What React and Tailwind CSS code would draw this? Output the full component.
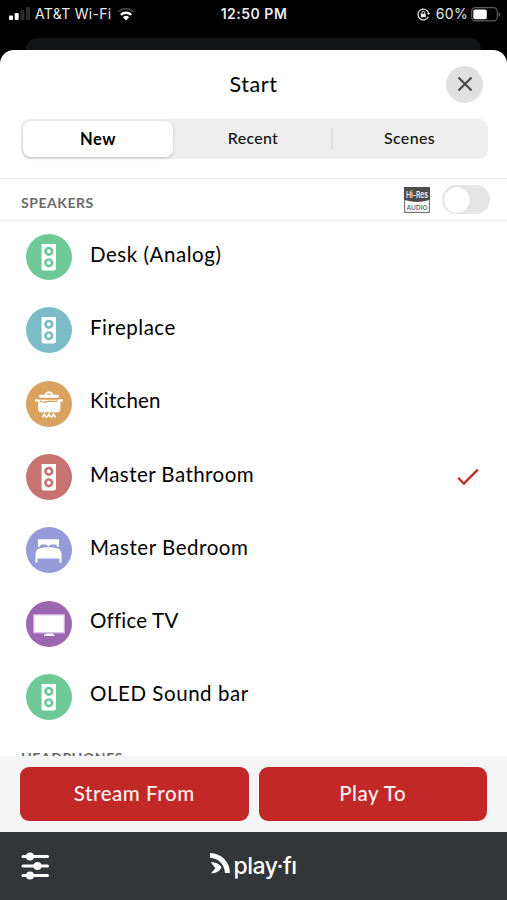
import React from "react";

function Signal() {
  return (
    <svg className="h-[14px] w-[22px]" viewBox="0 0 22 14">
      <rect x="0" y="8.6" width="4" height="4.4" rx="1" fill="#fff" />
      <rect x="5.7" y="6" width="4" height="7" rx="1" fill="#fff" />
      <rect x="11.4" y="3" width="4" height="10" rx="1" fill="#2c2c2c" />
      <rect x="17" y="0" width="4" height="13" rx="1" fill="#2c2c2c" />
    </svg>
  );
}

function Wifi() {
  return (
    <svg className="h-[14px] w-[18px]" viewBox="0 0 18 14" fill="none">
      <path d="M1.2 4.900a11.200 11.200 0 0 1 15.600 0" stroke="#3c3c3c" strokeWidth="2" />
      <path d="M3.800 7.800a7.600 7.600 0 0 1 10.400 0" stroke="#fff" strokeWidth="2.300" />
      <path d="M9 13.400 5.900 10.300a4.500 4.500 0 0 1 6.200 0Z" fill="#fff" />
    </svg>
  );
}

function RotationLock() {
  return (
    <svg className="h-[13px] w-[13px]" viewBox="0 0 13 13" fill="none" stroke="#e8e8e8">
      <path d="M11.600 5A5.400 5.400 0 1 0 11.300 8.800" strokeWidth="1.200" />
      <path d="M10 5h3l-1.300 2.300Z" fill="#e8e8e8" stroke="none" />
      <rect x="3.800" y="5.700" width="5" height="3.600" rx=".5" fill="#e8e8e8" stroke="none" />
      <path d="M4.900 6V4.700a1.400 1.400 0 0 1 2.800 0V6" strokeWidth="1" />
    </svg>
  );
}

function Battery() {
  return (
    <svg className="h-[15px] w-[30px]" viewBox="0 0 30 15">
      <rect x=".7" y=".7" width="25.600" height="13.200" rx="3.600" fill="none" stroke="#5c5c5c" strokeWidth="1.200" />
      <rect x="2.300" y="2.400" width="13.500" height="9.800" rx="1.800" fill="#fff" />
      <path d="M27.600 5v4.800c1-.3 1.600-1.300 1.600-2.400s-.6-2.100-1.600-2.400Z" fill="#5c5c5c" />
    </svg>
  );
}

function SpeakerGlyph({ color }) {
  return (
    <g>
      <path d="M15.600 10h14.400v24.200q0 2.200-2.200 2.200h-10q-2.200 0-2.200-2.200Z" fill="#fff" />
      <circle cx="22.800" cy="17.300" r="3.300" fill="none" stroke={color} strokeWidth="2.700" />
      <circle cx="22.800" cy="28.800" r="3.300" fill="none" stroke={color} strokeWidth="2.700" />
    </g>
  );
}

function PotGlyph({ color }) {
  return (
    <g>
      <path d="M19.700 14c0-3.600 6.600-3.600 6.600 0" fill="none" stroke="#fff" strokeWidth="1.700" />
      <rect x="13" y="13.800" width="20" height="2.900" rx="1.400" fill="#fff" />
      <path d="M9 18.200h4.200v.6h19.600v-.6h4.200v2.400h-2.600v7.400q0 3.200-3.200 3.200H15.400q-3.200 0-3.200-3.200v-7.400H9Z" fill="#fff" />
      <path d="M13.800 19.800c3 2.400 5.800 1.300 8.600.6 3-.7 5 1 9.300-.6" fill="none" stroke={color} strokeWidth="1.300" />
      <path d="m16.300 36.400 1.900-3.200 1.900 3.200m.9 0 1.900-3.200 1.900 3.200m.9 0 1.900-3.200 1.900 3.200" fill="none" stroke="#fff" strokeWidth="1.700" />
    </g>
  );
}

function BedGlyph() {
  return (
    <g fill="#fff">
      <path d="M12 12.200h21v7.600h-1.900c-.1-1.600-.8-2.300-2-2.300h-3.600c-1.400 0-2.300 1-3 2.100-.7-1.100-1.600-2.100-3-2.100h-3.600c-1.200 0-1.900.7-2 2.300H12Z" />
      <path d="M12.300 21.800c5.700-2 14.700-2 20.400 0 1.600.9 2.800 3 2.800 5.600v8h-2v-3.800h-22v3.800h-2v-8c0-2.600 1.200-4.700 2.800-5.600Z" />
    </g>
  );
}

function TvGlyph() {
  return (
    <g>
      <rect x="7.800" y="13.800" width="30.500" height="18" fill="#fff" stroke="#d5b7dd" strokeWidth="1.200" />
      <path d="M19.500 32.500h7.500v1.200h1.500v1.300H18v-1.300h1.500Z" fill="#fff" />
    </g>
  );
}

const glyphs = { speaker: SpeakerGlyph, pot: PotGlyph, bed: BedGlyph, tv: TvGlyph };

const speakers = [
  { name: "Desk (Analog)", icon: "speaker", color: "#6fc997", track: "tracking-[0.55px]" },
  { name: "Fireplace", icon: "speaker", color: "#7bbcc6", track: "tracking-[0.5px]" },
  { name: "Kitchen", icon: "pot", color: "#d9a35f", track: "tracking-[0.2px]" },
  { name: "Master Bathroom", icon: "speaker", color: "#c67372", track: "tracking-[0.45px]", selected: true },
  { name: "Master Bedroom", icon: "bed", color: "#979ad8", track: "tracking-[0.55px]" },
  { name: "Office TV", icon: "tv", color: "#9d66b1", track: "tracking-[0.2px]" },
  { name: "OLED Sound bar", icon: "speaker", color: "#6fc997", track: "tracking-[0.55px]" },
];

function SpeakerRow({ name, icon, color, track, selected }) {
  const Glyph = glyphs[icon];
  return (
    <li className="flex h-[73.3px] shrink-0 items-center pr-[28px] pl-[25.5px]">
      <svg className="mb-px h-[46px] w-[46px] shrink-0" viewBox="0 0 46 46">
        <circle cx="23" cy="23" r="23" fill={color} />
        <Glyph color={color} />
      </svg>
      <span className={`ml-[18.5px] flex-1 pb-[8px] text-[20.5px] leading-[26px] font-normal whitespace-nowrap text-black ${track}`}>
        {name}
      </span>
      {selected && (
        <svg className="mb-px h-[18px] w-[22px]" viewBox="0 0 22 18" fill="none">
          <path d="m1.200 9.800 5.700 5.800L20.800 1.600" stroke="#c1282a" strokeWidth="2.200" />
        </svg>
      )}
    </li>
  );
}

function HiRes() {
  return (
    <svg className="h-[26px] w-[26px] font-['Inter','Liberation_Sans',sans-serif]" viewBox="0 0 26 26">
      <rect x=".6" y=".6" width="24.800" height="24.800" fill="#fff" stroke="#777" strokeWidth="1.200" />
      <path d="M0 0h26v12.500c-7 3.200-19 3.200-26 0Z" fill="#4c4c4c" />
      <text x="2" y="11" textLength="22" lengthAdjust="spacingAndGlyphs" fontSize="9.500" fontWeight="600" fill="#eee">Hi-Res</text>
      <text x="2.500" y="22.800" textLength="21" lengthAdjust="spacingAndGlyphs" fontSize="6.500" fontWeight="500" fill="#555">AUDIO</text>
    </svg>
  );
}

function Sliders() {
  return (
    <svg className="h-[28px] w-[28px]" viewBox="0 0 28 28" stroke="#fff" fill="#fff">
      <path d="M2 4.400h24.500M2 14h24.500M2 23.600h24.500" strokeWidth="3" strokeLinecap="round" />
      <circle cx="9" cy="4.400" r="4" stroke="none" />
      <circle cx="16.500" cy="14" r="4" stroke="none" />
      <circle cx="9" cy="23.600" r="4" stroke="none" />
    </svg>
  );
}

function Logo() {
  return (
    <div className="flex items-start text-white">
      <svg className="h-[21px] w-[20px]" viewBox="0 0 20 21">
        <path d="M0 0c11.500.3 19.500 8.500 20 20h-5C14.500 11.500 9 5.300 0 4.700Z" fill="#fff" />
        <path d="M.8 9.300c5.200-.2 9 2 10.700 5.200-1.700 3.600-5.600 5.900-10.500 5.900l4.400-5.200Z" fill="#fff" />
      </svg>
      <span className="ml-[3px] font-['Inter',sans-serif] text-[23px] leading-[26px] font-medium tracking-[-0.5px]">play·fı</span>
    </div>
  );
}

export default function App() {
  return (
    <div className="flex h-[900px] w-[507px] flex-col overflow-hidden bg-black font-['Lato','Liberation_Sans',sans-serif]">
      <header className="grid h-[38px] shrink-0 grid-cols-3 pt-[5px] pr-[6px] pl-[9px] font-['Inter','Liberation_Sans',sans-serif] text-[14px] leading-[18px] text-[#ececec]">
        <div className="flex h-[18px] items-center whitespace-nowrap">
          <Signal />
          <span className="ml-[4px] tracking-[0.3px]">AT&amp;T Wi-Fi</span>
          <span className="ml-[5px] flex"><Wifi /></span>
        </div>
        <div className="h-[18px] pr-[2px] text-center font-semibold tracking-[0.5px]">12:50 PM</div>
        <div className="flex h-[18px] items-center justify-end">
          <RotationLock />
          <span className="mr-[3px] ml-[6px] tracking-[0.3px]">60%</span>
          <Battery />
        </div>
      </header>
      <div className="mx-[26px] h-[12px] shrink-0 rounded-t-[10px] bg-[#111314]" />

      <main className="flex min-h-0 flex-1 flex-col overflow-hidden rounded-t-[14px] bg-white">
        <div className="grid h-[69px] shrink-0 grid-cols-[1fr_auto_1fr] items-center px-[24px] pb-[1px]">
          <h1 className="col-start-2 text-[21.5px] leading-[28px] font-normal tracking-[0.6px] text-black">Start</h1>
          <button className="flex size-[37px] items-center justify-center justify-self-end rounded-full bg-[#e0e0e0]">
            <svg className="size-[14px]" viewBox="0 0 14 14">
              <path d="m1.200 1.200 11.600 11.600M12.800 1.200 1.200 12.800" stroke="#4a4a4a" strokeWidth="2.300" strokeLinecap="round" />
            </svg>
          </button>
        </div>

        <div className="mr-[19px] mb-[19px] ml-[21px] flex h-[40px] shrink-0 items-center rounded-[9px] bg-[#eee] p-[2px] text-[16px] leading-[20px] font-medium text-[#111]">
          <button className="h-[36px] w-[150px] rounded-[8px] bg-white pb-[1px] text-[16.5px] font-bold tracking-[0.6px] text-black shadow-[0_1px_3px_rgba(0,0,0,0.22)]">New</button>
          <button className="h-[36px] w-[158px] pb-[2px] pl-[2px] tracking-[0.3px]">Recent</button>
          <span className="h-[22px] w-[2px] bg-[#ddd]" />
          <button className="h-[36px] flex-1 pb-[2px] tracking-[0.3px]">Scenes</button>
        </div>

        <section className="flex h-[43px] shrink-0 items-center border-y border-[#e6e6e6] pr-[17px] pl-[21px]">
          <h2 className="flex-1 pt-[6px] text-[14px] leading-[18px] font-bold tracking-[0.55px] text-[#6a6a6a]">SPEAKERS</h2>
          <HiRes />
          <span className="ml-[12px] flex h-[29px] w-[48px] items-center rounded-full bg-[#e6e6e6] p-[1.5px]">
            <span className="size-[26px] rounded-full bg-white shadow-[0_0_2px_rgba(0,0,0,0.12)]" />
          </span>
        </section>

        <div className="min-h-0 flex-1 overflow-hidden">
          <ul className="flex flex-col">
            {speakers.map((s) => (
              <SpeakerRow key={s.name} {...s} />
            ))}
          </ul>
          <h2 className="pt-[15px] pl-[21px] text-[14px] leading-[18px] font-bold tracking-[0.55px] text-[#666]">HEADPHONES</h2>
        </div>

        <div className="flex h-[76px] shrink-0 gap-[10px] bg-[#f5f5f5] px-[20px] pt-[11px] pb-[11px] text-[20.5px] font-medium tracking-[0.55px] text-[#fdf1f1]">
          <button className="h-[54px] flex-1 rounded-[9px] bg-[#c22828] pb-[1px]">Stream From</button>
          <button className="h-[54px] flex-1 rounded-[9px] bg-[#c22828] pb-[1px]">Play To</button>
        </div>
      </main>

      <footer className="grid h-[68px] shrink-0 grid-cols-[1fr_auto_1fr] items-center bg-[#323639] px-[21px]">
        <Sliders />
        <Logo />
      </footer>
    </div>
  );
}
